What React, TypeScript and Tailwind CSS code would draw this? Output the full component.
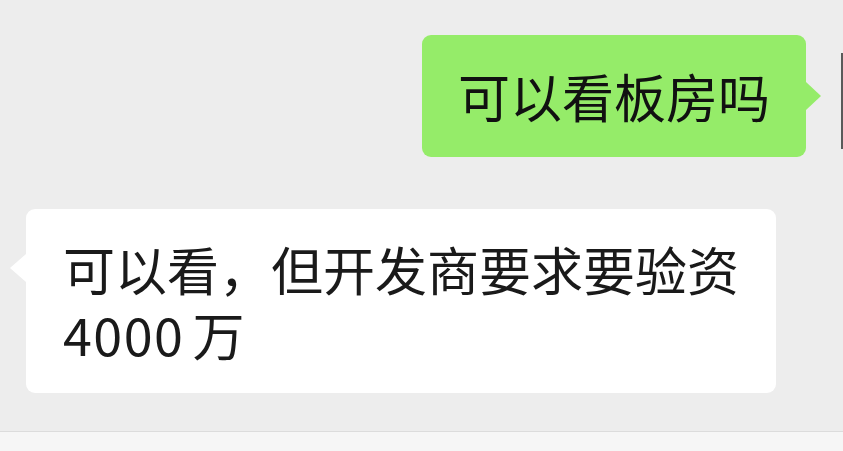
export default function App() {
  return (
    <div
      className="w-[843px] h-[451px] overflow-hidden bg-[#ededed] flex flex-col"
      style={{ fontFamily: '"Noto Sans CJK SC", "Noto Sans", sans-serif' }}
    >
      <div className="flex-1 flex flex-col pt-[35px]">
        {/* Outgoing message */}
        <div className="flex justify-end items-start mr-[-88px]">
          <div className="relative bg-[#95ec69] rounded-[9px] h-[122px] px-[36px] flex items-center">
            <span className="text-[52px] leading-[64px] text-[#111]">可以看板房吗</span>
            <div className="absolute right-[-15px] top-[47px] w-0 h-0 border-y-[14px] border-y-transparent border-l-[15px] border-l-[#95ec69]" />
          </div>
          <div className="ml-[35px] mt-[18px] w-[90px] h-[96px] shrink-0 bg-[#d4d4d4] border-l-2 border-[#5a5a5a]" />
        </div>

        {/* Incoming message */}
        <div className="mt-[52px] pl-[26px]">
          <div className="relative bg-white rounded-[9px] w-[750px] px-[37px] py-[27px] text-[52px] leading-[65px] text-[#1a1a1a] whitespace-nowrap">
            <div>可以看，但开发商要求要验资</div>
            <div className="flex">
              <span className="tracking-[1.5px] mr-[8px]">4000</span>
              <span>万</span>
            </div>
            <div className="absolute left-[-16px] top-[45px] w-0 h-0 border-y-[14px] border-y-transparent border-r-[16px] border-r-white" />
          </div>
        </div>
      </div>

      {/* Input bar edge */}
      <div className="h-[20px] bg-[#f6f6f6] border-t border-[#dcdcdc]" />
    </div>
  );
}
